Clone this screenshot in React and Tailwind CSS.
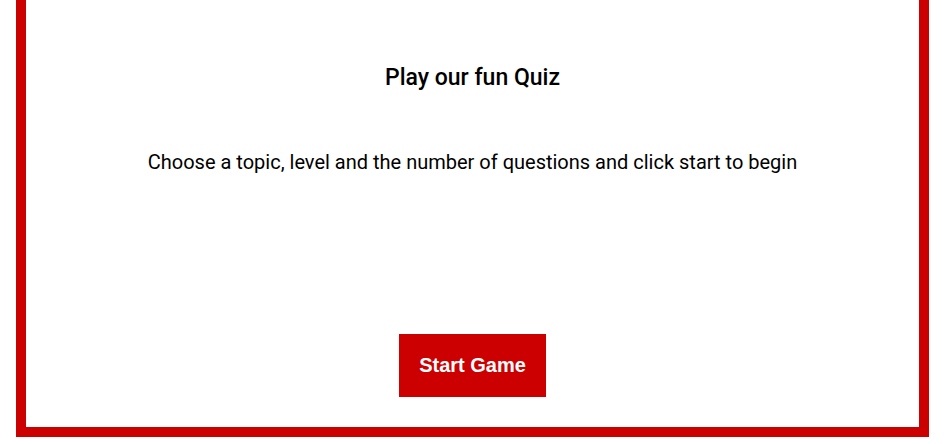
import React from 'react';

function App() {
  return (
    <div className="w-[951px] h-[444px] bg-white overflow-hidden">
      <div className="ml-[16px] w-[913px] h-[437px] border-x-[10px] border-b-[10px] border-[#cc0000] flex flex-col items-center font-['Roboto',sans-serif] text-black">
        <h1 className="mt-[64px] text-[23px] leading-[28px] font-medium">Play our fun Quiz</h1>
        <p className="mt-[57px] text-[20px] leading-[26px]">
          Choose a topic, level and the number of questions and click start to begin
        </p>
        <button className="mt-[159px] w-[147px] h-[63px] pb-[2px] bg-[#cc0000] text-white text-[20px] font-bold font-['Liberation_Sans',Arial,sans-serif]">
          Start Game
        </button>
      </div>
    </div>
  );
}

export default App;
